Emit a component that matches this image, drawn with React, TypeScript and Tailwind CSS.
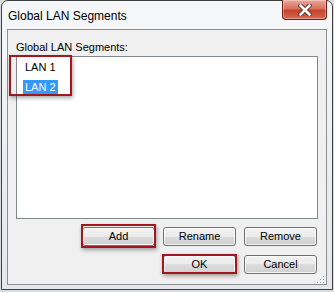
import React from "react";

const btn =
  "relative h-[19px] w-[73px] rounded-[3px] border border-[#707070] bg-[linear-gradient(to_bottom,#f2f2f2_0%,#ebebeb_50%,#dddddd_50%,#cfcfcf_100%)] shadow-[inset_0_0_0_1px_rgba(255,255,255,0.8)] text-[11px] leading-[17px] text-black text-center";

function RedBox({ cls }: { cls: string }) {
  return (
    <div
      className={
        "pointer-events-none absolute border-2 border-[#a3161d] shadow-[1px_2px_4px_rgba(0,0,0,0.35)] " +
        cls
      }
    />
  );
}

export default function App() {
  return (
    <div
      className="w-[334px] h-[292px] overflow-hidden bg-[#d8dce0]"
      style={{ fontFamily: '"Liberation Sans", Arial, sans-serif' }}
    >
      <div className="ml-px w-[332px] h-[290px] rounded-t-[7px] border border-[#3f3f3f] bg-[linear-gradient(to_bottom,#f6f7f8_0%,#eef0f2_40%,#e4e8ec_100%)] flex flex-col">
        {/* title bar */}
        <div className="h-[28px] flex items-start justify-between">
          <div className="pl-[6px] pt-[8px] text-[12px] leading-[14px] text-black">
            Global LAN Segments
          </div>
          <div className="-mt-px mr-[5px] w-[45px] h-[20px] rounded-b-[4px] border border-[#6b1f17] border-t-0 bg-[linear-gradient(to_bottom,#eaa89b_0%,#d9705d_45%,#c4412b_55%,#d46a52_100%)] shadow-[inset_0_0_0_1px_rgba(255,255,255,0.35)] flex items-center justify-center">
            <svg width="14" height="12" viewBox="0 0 14 12">
              <path
                d="M2.5 1.5 L11.5 10.5 M11.5 1.5 L2.5 10.5"
                stroke="#5a2a22"
                strokeWidth="4.4"
                strokeLinecap="square"
              />
              <path
                d="M2.5 1.5 L11.5 10.5 M11.5 1.5 L2.5 10.5"
                stroke="#ffffff"
                strokeWidth="2.6"
                strokeLinecap="square"
              />
            </svg>
          </div>
        </div>

        {/* client area */}
        <div className="ml-[5px] w-[320px] h-[256px] border border-[#8e8f8f] bg-[#f0f0f0] pl-[8px] pr-[8px] pt-[10px] flex flex-col">
          <div className="text-[11px] leading-[14px] text-black">
            Global LAN Segments:
          </div>
          <div className="relative mt-[2px] w-[302px] h-[163px] border border-[#828790] bg-white pt-[3px] pl-[6px]">
            <div className="pl-[2px] text-[11px] leading-[14px] text-black">
              LAN 1
            </div>
            <div>
              <span className="inline-block px-[2px] text-[11px] leading-[14px] bg-[#3399ff] text-white">
                LAN 2
              </span>
            </div>
            <RedBox cls="left-[-8px] top-[-2px] w-[63px] h-[41px]" />
          </div>

          <div className="mt-[8px] mr-px flex justify-end gap-[8px]">
            <div className="relative">
              <div className={btn}>Add</div>
              <RedBox cls="left-[-1px] right-[-1px] top-[-3px] bottom-[-2px]" />
            </div>
            <div className={btn}>Rename</div>
            <div className={btn}>Remove</div>
          </div>
          <div className="mt-[9px] mr-px flex justify-end gap-[8px]">
            <div className="relative">
              <div className={btn}>OK</div>
              <RedBox cls="left-[-1px] right-[-1px] top-[-1px] bottom-0" />
            </div>
            <div className={btn}>Cancel</div>
          </div>
          <div className="mt-[2px] mr-[-7px] self-end">
            <svg width="8" height="8" viewBox="0 0 8 8">
              <rect x="6" y="0" width="1" height="1" fill="#a0a0a0" />
              <rect x="3" y="3" width="1" height="1" fill="#a0a0a0" />
              <rect x="6" y="3" width="1" height="1" fill="#a0a0a0" />
              <rect x="0" y="6" width="1" height="1" fill="#a0a0a0" />
              <rect x="3" y="6" width="1" height="1" fill="#a0a0a0" />
              <rect x="6" y="6" width="1" height="1" fill="#a0a0a0" />
            </svg>
          </div>
        </div>
      </div>
    </div>
  );
}
